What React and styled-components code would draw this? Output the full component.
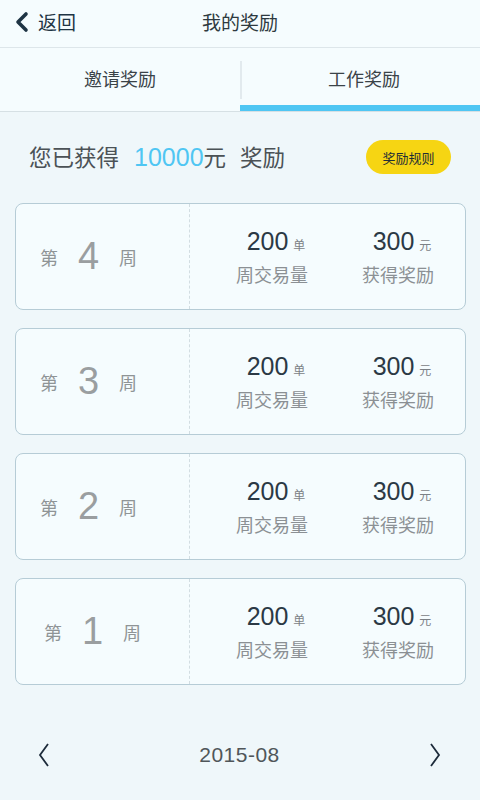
import React from 'react';
import styled, { createGlobalStyle } from 'styled-components';

const GlobalStyle = createGlobalStyle`
	html, body {
		margin: 0;
		padding: 0;
		background: #eff7fa;
		font-family: 'Noto Sans CJK SC', 'Liberation Sans', sans-serif;
	}
	* {
		box-sizing: border-box;
	}
`;

const Page = styled.div`
	width: 480px;
	height: 800px;
	display: flex;
	flex-direction: column;
	background: #eff7fa;
`;

const Header = styled.div`
	height: 48px;
	display: flex;
	align-items: center;
	position: relative;
	background: #f5fcfe;
	border-bottom: 1px solid #dde6ea;
	padding-bottom: 5px;
	.back {
		display: flex;
		align-items: center;
		padding-left: 14px;
		gap: 8px;
		font-size: 19px;
		color: #1e3444;
		svg {
			display: block;
			margin-top: 2px;
		}
	}
	.title {
		position: absolute;
		left: 0;
		right: 0;
		text-align: center;
		font-size: 19px;
		color: #2e3a40;
		pointer-events: none;
	}
`;

const Tabs = styled.div`
	height: 64px;
	display: flex;
	background: #f5fcfe;
	border-bottom: 1px solid #d6e0e4;
`;

const Tab = styled.div`
	width: 50%;
	display: flex;
	align-items: center;
	justify-content: center;
	font-size: 18px;
	color: #3a4348;
	position: relative;
	border-bottom: 6px solid ${props => (props.active ? '#4fc6f3' : 'transparent')};
	padding-top: 2px;
	padding-left: ${props => (props.active ? 8 : 0)}px;
	&:not(:first-child)::before {
		content: '';
		position: absolute;
		left: 0;
		top: 13px;
		bottom: 6px;
		border-left: 2px solid #e2eaee;
	}
`;

const Summary = styled.div`
	display: flex;
	align-items: center;
	justify-content: space-between;
	padding: 28px 14px 0 29px;
	height: 91px;
	.text {
		font-size: 22.5px;
		color: #4b5256;
		display: flex;
		align-items: baseline;
		padding-bottom: 32px;
		.amount {
			font-family: 'Liberation Sans', sans-serif;
			font-size: 25px;
			color: #4fc6f3;
			margin-left: 15px;
		}
		.unit {
			margin-right: 14px;
		}
	}
`;

const RuleButton = styled.div`
	background: #f6d513;
	border-radius: 18px;
	height: 34px;
	width: 85px;
	display: flex;
	align-items: center;
	justify-content: center;
	font-size: 13px;
	color: #1f2d36;
	margin-bottom: 29px;
	margin-right: 15px;
`;

const List = styled.div`
	display: flex;
	flex-direction: column;
	gap: 18px;
	padding: 0 14px 0 15px;
`;

const Card = styled.div`
	height: 107px;
	border: 1px solid #b6ccd6;
	border-radius: 8px;
	background: #f5fcfe;
	display: flex;
`;

const WeekCol = styled.div`
	width: 174px;
	border-right: 1px dashed #d2dde2;
	display: flex;
	align-items: center;
	padding-left: ${props => props.pad}px;
	color: #8f9496;
	font-size: 18px;
	.num {
		font-size: 38px;
		font-weight: 300;
		font-family: 'Liberation Sans', sans-serif;
		margin: 0 21px 0 20px;
		color: #9a9ea0;
		width: 20px;
		text-align: center;
	}
`;

const Stats = styled.div`
	flex: 1;
	display: flex;
	align-items: center;
	padding-left: 45px;
	gap: 52px;
`;

const Stat = styled.div`
	display: flex;
	flex-direction: column;
	align-items: center;
	width: 74px;
	.value {
		display: flex;
		align-items: baseline;
		font-family: 'Liberation Sans', sans-serif;
		font-size: 25px;
		color: #2b3945;
		height: 34px;
		padding-left: 8px;
		span {
			font-family: 'Noto Sans CJK SC', sans-serif;
			font-size: 12px;
			color: #7b8186;
			margin-left: 5px;
		}
	}
	.label {
		font-size: 18px;
		color: #8b9094;
		white-space: nowrap;
	}
`;

const Footer = styled.div`
	margin-top: auto;
	height: 90px;
	display: flex;
	align-items: center;
	justify-content: space-between;
	padding: 0 38px 0 37px;
	.date {
		font-family: 'Liberation Sans', sans-serif;
		font-size: 21px;
		letter-spacing: 0.5px;
		color: #505659;
	}
	svg {
		display: block;
	}
`;

const weeks = [
	{ n: 4, pad: 24 },
	{ n: 3, pad: 24 },
	{ n: 2, pad: 24 },
	{ n: 1, pad: 28 },
];

const App = () => {
	return (
		<Page>
			<GlobalStyle />
			<Header>
				<div className="back">
					<svg width="16" height="22" viewBox="0 0 16 22">
						<path d="M12 3 L4 11 L12 19" fill="none" stroke="#1e3444" strokeWidth="3.6" strokeLinecap="round" strokeLinejoin="round" />
					</svg>
					<span>返回</span>
				</div>
				<div className="title">我的奖励</div>
			</Header>
			<Tabs>
				<Tab>邀请奖励</Tab>
				<Tab active>工作奖励</Tab>
			</Tabs>
			<Summary>
				<div className="text">
					您已获得<span className="amount">10000</span>
					<span className="unit">元</span>奖励
				</div>
				<RuleButton>奖励规则</RuleButton>
			</Summary>
			<List>
				{weeks.map(w => (
					<Card key={w.n}>
						<WeekCol pad={w.pad}>
							第<span className="num">{w.n}</span>周
						</WeekCol>
						<Stats>
							<Stat>
								<div className="value">
									200<span>单</span>
								</div>
								<div className="label">周交易量</div>
							</Stat>
							<Stat>
								<div className="value">
									300<span>元</span>
								</div>
								<div className="label">获得奖励</div>
							</Stat>
						</Stats>
					</Card>
				))}
			</List>
			<Footer>
				<svg width="14" height="26" viewBox="0 0 14 26">
					<path d="M11 2 L3 13 L11 24" fill="none" stroke="#1d2b3a" strokeWidth="1.8" />
				</svg>
				<div className="date">2015-08</div>
				<svg width="14" height="26" viewBox="0 0 14 26">
					<path d="M3 2 L11 13 L3 24" fill="none" stroke="#1d2b3a" strokeWidth="1.8" />
				</svg>
			</Footer>
		</Page>
	);
};

export default App;
